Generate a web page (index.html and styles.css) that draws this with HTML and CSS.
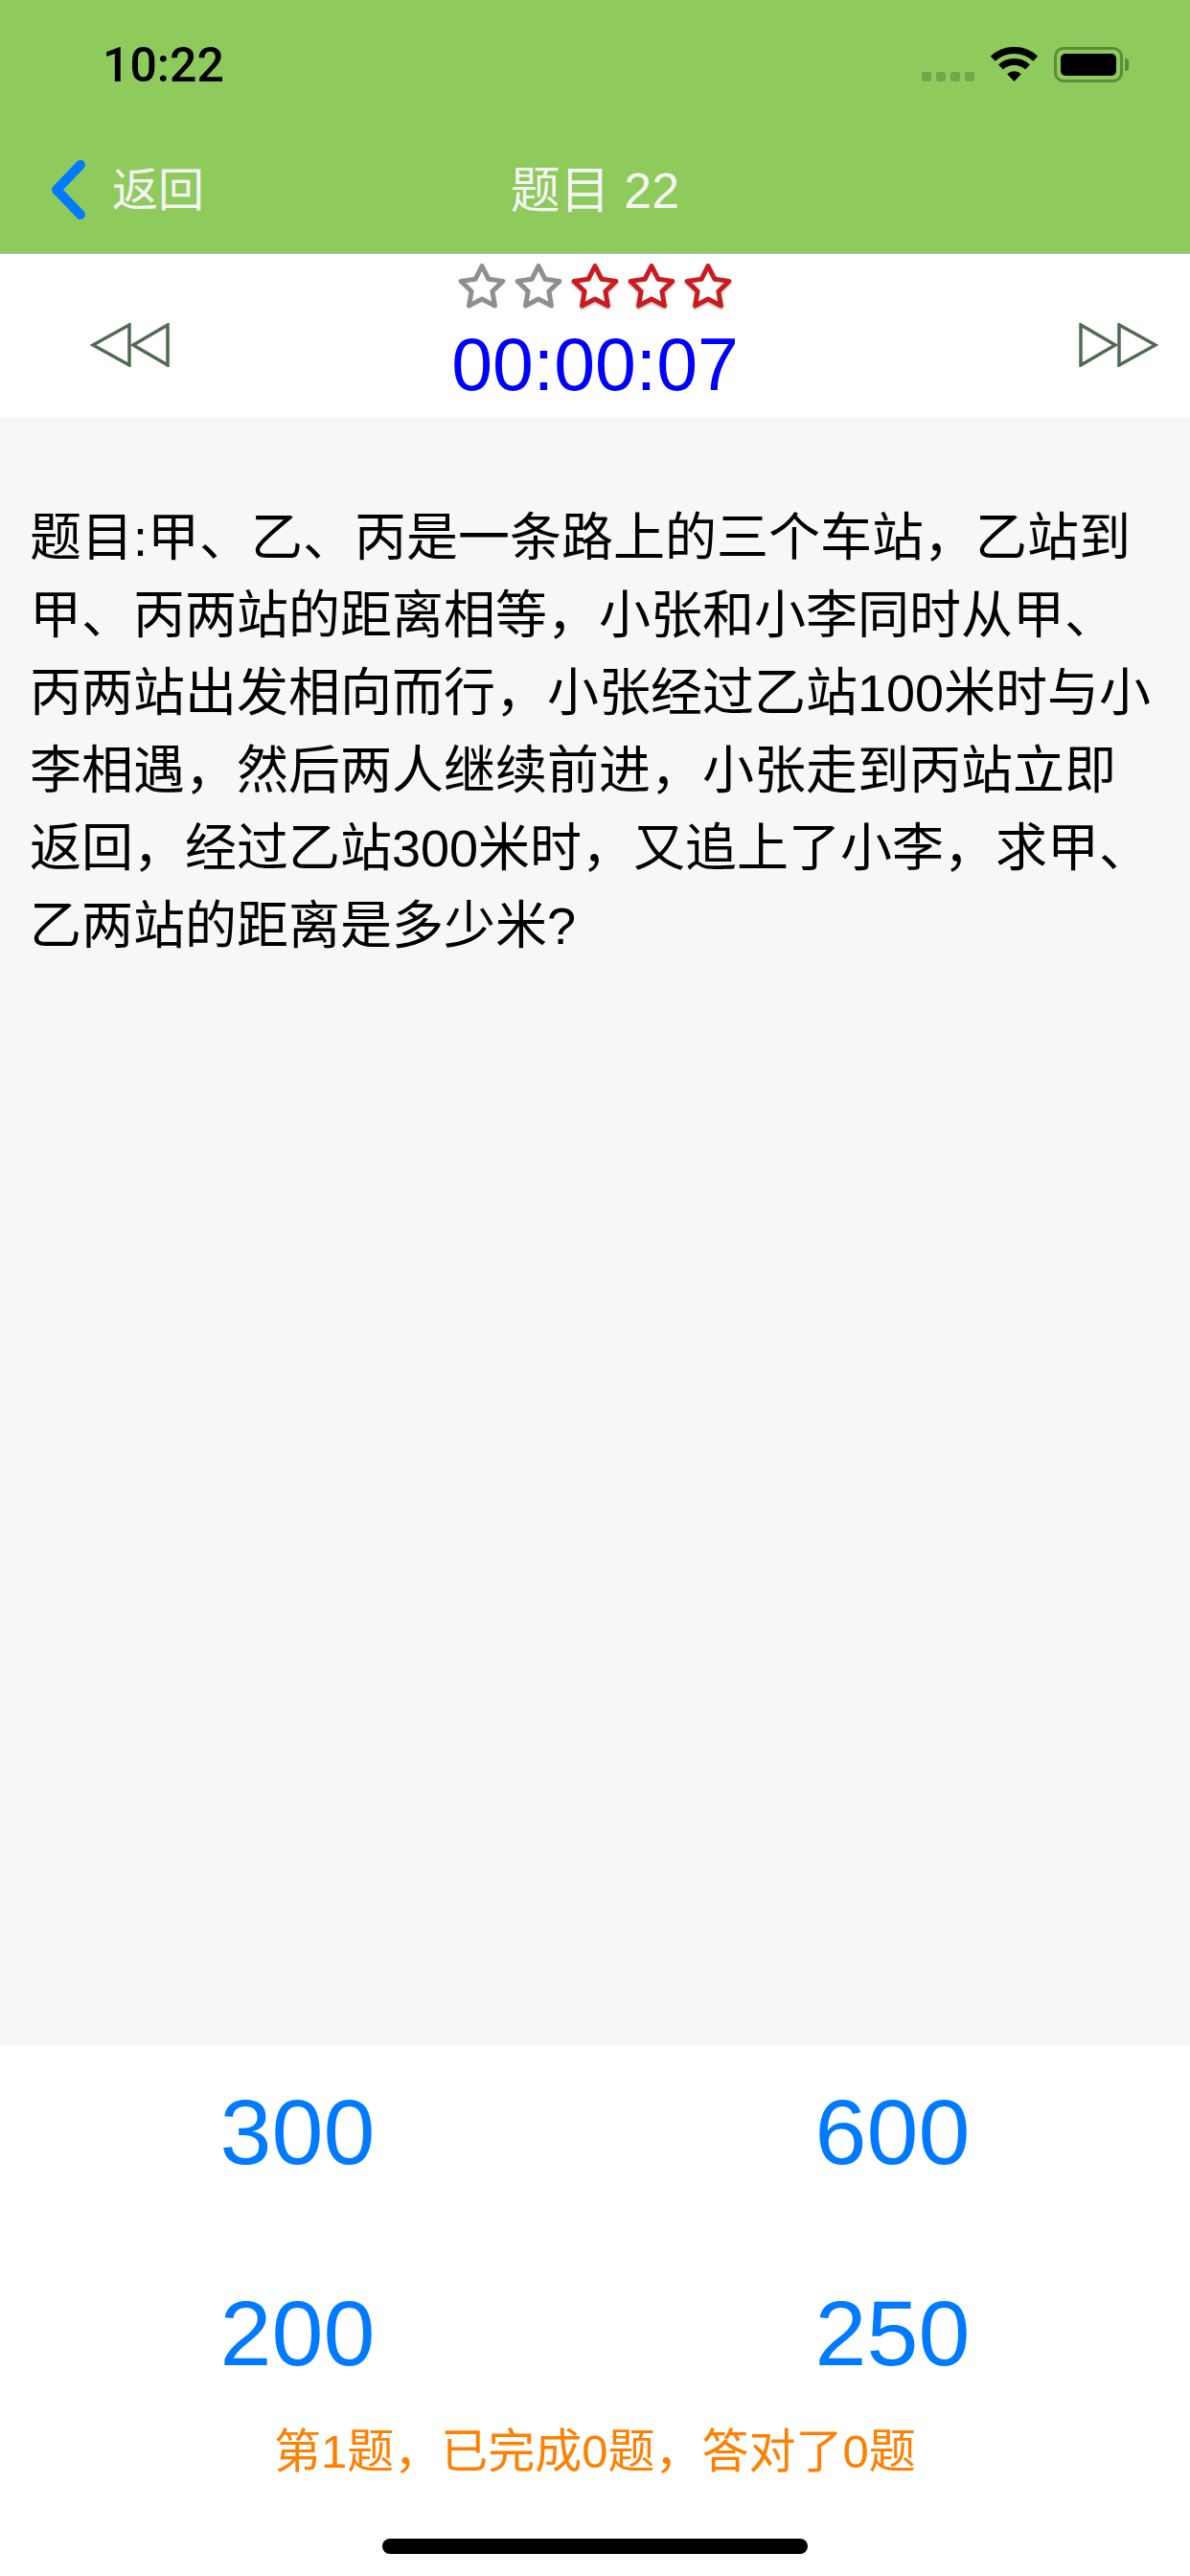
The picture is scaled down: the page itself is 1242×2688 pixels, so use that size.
FILE: index.html
```html
<!DOCTYPE html>
<html lang="zh-CN">
<head>
    <meta charset="UTF-8">
    <meta name="viewport" content="width=device-width, initial-scale=1.0">
    <title>题目 22</title>
    <link rel="stylesheet" href="styles.css">
</head>
<body>
    <svg class="defs" width="0" height="0" aria-hidden="true">
        <symbol id="star" viewBox="0 0 50 48">
            <path d="M25 3.5L31.8 17.2L46.9 19.4L35.9 30L38.5 45.1L25 38L11.5 45.1L14.1 30L3.1 19.4L18.2 17.2Z"/>
        </symbol>
        <symbol id="double-arrow" viewBox="0 0 83 46">
            <path d="M41 2L3 23L41 44Z"/>
            <path d="M81 2L45 23L81 44Z"/>
        </symbol>
    </svg>

    <div class="page">
        <header class="header">
            <div class="status-bar">
                <span class="time">10:22</span>
                <div class="status-icons">
                    <div class="signal"><i></i><i></i><i></i><i></i></div>
                    <svg class="wifi" viewBox="0 0 49 36">
                        <path class="wifi-arc" d="M2.3 12.2A32.5 32.5 0 0 1 46.7 12.2"/>
                        <path class="wifi-arc" d="M10.5 21A20.5 20.5 0 0 1 38.5 21"/>
                        <path d="M24.5 36L17.2 28.2A10.5 10.5 0 0 1 31.8 28.2Z"/>
                    </svg>
                    <div class="battery"><div class="battery-level"></div></div>
                </div>
            </div>
            <nav class="nav-bar">
                <div class="back">
                    <svg class="chevron" viewBox="0 0 36 62">
                        <path d="M31 5L6 31L31 57"/>
                    </svg>
                    <span>返回</span>
                </div>
                <div class="nav-title">题目 22</div>
            </nav>
        </header>

        <section class="toolbar">
            <svg class="arrow"><use href="#double-arrow"/></svg>
            <div class="progress">
                <div class="stars">
                    <svg class="star"><use href="#star"/></svg>
                    <svg class="star"><use href="#star"/></svg>
                    <svg class="star star-on"><use href="#star"/></svg>
                    <svg class="star star-on"><use href="#star"/></svg>
                    <svg class="star star-on"><use href="#star"/></svg>
                </div>
                <div class="timer">00:00:07</div>
            </div>
            <svg class="arrow arrow-next"><use href="#double-arrow"/></svg>
        </section>

        <main class="question">
            <p>题目:甲、乙、丙是一条路上的三个车站，乙站到甲、丙两站的距离相等，小张和小李同时从甲、丙两站出发相向而行，小张经过乙站100米时与小李相遇，然后两人继续前进，小张走到丙站立即返回，经过乙站300米时，又追上了小李，求甲、乙两站的距离是多少米?</p>
        </main>

        <section class="answers">
            <div class="options">
                <button class="option">300</button>
                <button class="option">600</button>
                <button class="option">200</button>
                <button class="option">250</button>
            </div>
            <div class="score">第1题，已完成0题，答对了0题</div>
            <div class="home-indicator"></div>
        </section>
    </div>
</body>
</html>
```

FILE: styles.css
```css
* {
    box-sizing: border-box;
}
body {
    margin: 0;
    font-family: "Liberation Sans", "Noto Sans CJK SC", sans-serif;
    background: #fff;
    color: #000;
}
.defs {
    position: absolute;
}
.page {
    display: flex;
    flex-direction: column;
    height: 100vh;
}

/* top green area */
.header {
    background: #8ecb5c;
    border-bottom: 1px solid #b4b4b4;
    height: 265px;
}
.status-bar {
    display: flex;
    justify-content: space-between;
    height: 132px;
    padding: 40px 70px 0 107px;
}
.time {
    font-family: Roboto, "Liberation Sans", sans-serif;
    font-weight: 500;
    font-size: 50px;
    line-height: 57px;
}
.status-icons {
    display: flex;
    align-items: flex-start;
    padding-top: 9px;
}
.signal {
    display: flex;
    gap: 5px;
    margin: 26px 17px 0 0;
}
.signal i {
    width: 10px;
    height: 10px;
    border-radius: 3px;
    background: #72a64a;
}
.wifi {
    width: 49px;
    height: 36px;
    margin-right: 17px;
}
.wifi-arc {
    fill: none;
    stroke: #000;
    stroke-width: 7;
}
.battery {
    position: relative;
    width: 72px;
    height: 37px;
    padding: 4px;
    border: 3px solid #5e8a3c;
    border-radius: 10px;
}
.battery::after {
    content: "";
    position: absolute;
    left: 71px;
    top: 9px;
    width: 4px;
    height: 13px;
    background: #5e8a3c;
    border-radius: 0 3px 3px 0;
}
.battery-level {
    height: 100%;
    background: #000;
    border-radius: 5px;
}
.nav-bar {
    position: relative;
    display: flex;
    align-items: center;
    justify-content: center;
    height: 132px;
    color: #f5f5f5;
    font-size: 52px;
}
.back {
    position: absolute;
    left: 53px;
    top: 35px;
    display: flex;
    align-items: center;
    gap: 28px;
    font-size: 48px;
}
.back span {
    margin-top: -8px;
}
.chevron {
    width: 36px;
    height: 62px;
}
.chevron path {
    fill: none;
    stroke: #007aff;
    stroke-width: 10;
    stroke-linecap: round;
    stroke-linejoin: round;
}
.nav-title {
    margin-top: -7px;
}

/* stars, timer and the two arrows */
.toolbar {
    display: grid;
    grid-template-columns: 1fr auto 1fr;
    height: 170px;
    padding: 0 33px 0 94px;
}
.arrow {
    width: 83px;
    height: 46px;
    margin-top: 72px;
    fill: none;
    stroke: #4f6b53;
    stroke-width: 3.5;
}
.arrow-next {
    justify-self: end;
    transform: scaleX(-1);
}
.progress {
    display: flex;
    flex-direction: column;
    align-items: center;
    padding-top: 9px;
    /* padding of the toolbar is uneven, pull the middle column back on centre */
    margin-left: -61px;
}
.stars {
    display: flex;
    gap: 9px;
    filter: blur(0.6px);
}
.star {
    width: 50px;
    height: 48px;
    fill: #fff;
    stroke: #8e8e93;
    stroke-width: 5;
    stroke-linejoin: round;
}
.star-on {
    stroke: #cc1b1f;
    filter: drop-shadow(0 2px 1px rgba(0, 0, 0, 0.2));
}
.timer {
    margin-top: 15px;
    color: #0000ff;
    font-size: 77px;
    line-height: 86px;
}

/* question text */
.question {
    flex: 1;
    background: #f7f7f7;
    padding: 86px 31px 0;
}
.question p {
    margin: 0;
    font-size: 54px;
    line-height: 81px;
}

/* answers at the bottom */
.answers {
    display: flex;
    flex-direction: column;
    align-items: center;
    height: 553px;
}
.options {
    display: grid;
    grid-template-columns: 1fr 1fr;
    grid-auto-rows: 210px;
    width: 100%;
    margin-top: -15px;
}
.option {
    border: none;
    background: none;
    padding: 0;
    color: #007aff;
    font-family: inherit;
    font-size: 97px;
}
.score {
    margin-top: -10px;
    color: #ff8000;
    font-size: 49px;
    line-height: 56px;
}
.home-indicator {
    width: 444px;
    height: 16px;
    margin-top: 63px;
    background: #000;
    border-radius: 8px;
}
```
